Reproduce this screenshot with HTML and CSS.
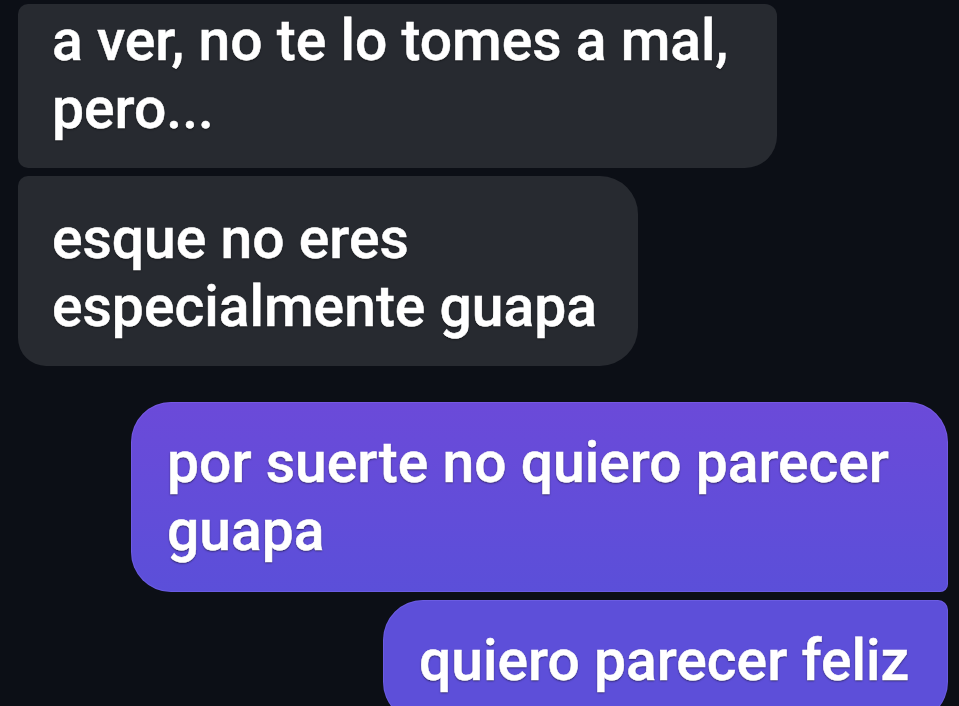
FILE: index.html
```html
<!DOCTYPE html>
<html lang="es">
<head>
<meta charset="utf-8">
<title>Chat</title>
<link rel="stylesheet" href="styles.css">
</head>
<body>
<main class="chat">
  <div class="bubble in first">a ver, no te lo tomes a mal,<br>pero...</div>
  <div class="bubble in last">esque no eres<br>especialmente guapa</div>
  <div class="bubble out first">por suerte no quiero parecer<br>guapa</div>
  <div class="bubble out last">quiero parecer feliz</div>
</main>
</body>
</html>
```
FILE: styles.css
```css
html, body {
  margin: 0;
  padding: 0;
  background: #0c0f16;
  height: 100%;
  overflow: hidden;
}

.chat {
  display: flex;
  flex-direction: column;
  padding: 4px 11px 0 18px;
  font-family: Roboto, "Liberation Sans", Arial, sans-serif;
  font-weight: 500;
  font-size: 57px;
  line-height: 68px;
  color: #ffffff;
}

.bubble {
  box-sizing: border-box;
  white-space: nowrap;
  padding: 27px 20px 27px 34px;
  text-shadow: 0 1px 2px rgba(0, 0, 0, 0.6);
  -webkit-text-stroke: 0.5px #ffffff;
}

.in {
  align-self: flex-start;
  background: #272a30;
}

.out {
  align-self: flex-end;
  padding-left: 36px;
  box-shadow: inset 0 0 0 1px rgba(150, 130, 255, 0.25);
}

.in.first {
  width: 759px;
  padding-top: 3px;
  padding-bottom: 25px;
  border-radius: 10px 12px 32px 10px;
}

.in.last {
  width: 620px;
  margin-top: 8px;
  padding-top: 29px;
  padding-bottom: 25px;
  border-radius: 10px 38px 38px 28px;
}

.out.first {
  width: 817px;
  margin-top: 36px;
  border-radius: 40px 40px 8px 40px;
  background: linear-gradient(180deg, #6b4ad9 0%, #5b4fd9 100%);
}

.out.last {
  width: 565px;
  margin-top: 8px;
  border-radius: 40px 10px 40px 40px;
  background: #5d4fd9;
}
```
